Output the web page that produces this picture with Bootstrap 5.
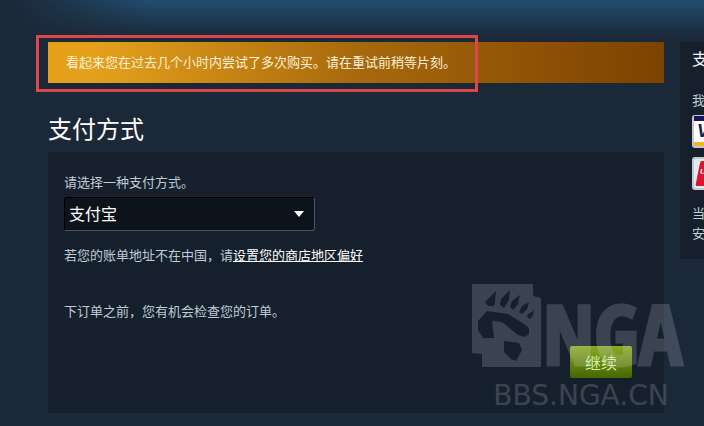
<!DOCTYPE html>
<html lang="zh-CN">
<head>
<meta charset="utf-8">
<meta name="viewport" content="width=device-width, initial-scale=1">
<title>支付方式</title>
<link href="https://cdn.jsdelivr.net/npm/bootstrap@5.3.0/dist/css/bootstrap.min.css" rel="stylesheet">
<style>
body{
  font:13px/20px "Noto Sans CJK SC",sans-serif;color:#bfcbd5;background-color:#1b2838;
  background-image:linear-gradient(90deg,#1b2838 10px,rgba(27,40,56,0) 150px),linear-gradient(180deg,#214d70 0,#1f3f5a 14px,#1b2838 38px);
  background-repeat:no-repeat;
}
.page-wrap{padding:42px 0 13px 48px;gap:16px}
.notice{padding:10px 18px 11px;color:#fbf0d8;background:linear-gradient(90deg,#e4a01b 0,#e4a01b 8%,#a8690d 50%,#7c4200 100%)}
.notice-frame{top:-7px;left:-12px;width:442px;height:57px;border:3px solid #dc474b}
.page-title{font-size:24px;line-height:36px;font-weight:400;color:#fff;margin:27px 0 6px}
.panel{background:#16202c}
.pay-panel{padding:20px 32px 35px 16px}
.pay-select{
  width:251px;height:34px;margin-top:5px;padding:0 32px 2px 4px;font-size:16px;line-height:24px;color:#fff;border-radius:3px;
  border:1px solid #000;border-right-color:#4b5663;border-bottom-color:#4b5663;
  background:#0d131a url("data:image/svg+xml,%3Csvg xmlns='http://www.w3.org/2000/svg' viewBox='0 0 10 6'%3E%3Cpath d='M0 0h10L5 6z' fill='%23fff'/%3E%3C/svg%3E") no-repeat right 10px center/10px 6px;
}
.region-note{margin:14px 0 36px}
.region-note a{color:#fff}
.review-note{margin:0 0 25px}
.go-btn{height:32px;padding:0 15px;font-size:16px;line-height:30px;color:#d2efa9;border:0;border-radius:2px;background:linear-gradient(180deg,#8aaa22,#466600)}
.go-btn:hover{color:#fff;background:#8aaa22}
.watermark{right:-20px;bottom:0;width:212px;height:132px;pointer-events:none}
.side{width:24px;padding:6px 0 16px 12px}
.side-title{font-size:16px;line-height:20px;font-weight:400;color:#fff;margin:0 0 22px}
.side svg{width:52px;height:33px;flex:none}
.side-cards{gap:9px;margin:5px 0 13px}
</style>
</head>
<body>
<div class="page-wrap d-flex align-items-start overflow-hidden">
  <main class="flex-grow-1">
    <div class="notice position-relative" role="alert">看起来您在过去几个小时内尝试了多次购买。请在重试前稍等片刻。
      <div class="notice-frame position-absolute"></div>
    </div>
    <h1 class="page-title">支付方式</h1>
    <form class="panel pay-panel position-relative">
      <label for="method" class="d-block">请选择一种支付方式。</label>
      <select id="method" class="form-select pay-select"><option>支付宝</option></select>
      <p class="region-note">若您的账单地址不在中国，请<a href="#">设置您的商店地区偏好</a></p>
      <p class="review-note">下订单之前，您有机会检查您的订单。</p>
      <div class="d-flex justify-content-end"><button type="button" class="btn go-btn">继续</button></div>
      <svg class="watermark position-absolute" viewBox="0 0 212 132" role="img" aria-label="NGA">
        <g fill="#e2e4f4" opacity=".18">
          <path fill-rule="evenodd" d="M0 3H61V15L69 17V86H10V73L0 72Z
            M24 10L23 21L22 25L16 25L13 21L17 17Z M38 9L37 19L32 27L28 24L29 18Z M48 14L46 23L41 29L38 26L40 20Z M57 21L55 28L50 33L47 31L50 25Z M62 27L61 35L58 38L55 36L56 33L60 31Z
            M15 30L36 33L52 43L57 47V53L53 56L46 54L30 41L20 40L22 57L11 57L6 49V40Z M32 60L47 62L50 69L44 80L39 78L32 71Z"/>
          <text x="71" y="84" font-family="'Open Sans Condensed','Roboto Condensed','Liberation Sans Narrow','Liberation Sans',sans-serif" font-size="82" font-weight="700" stroke="#e2e4f4" stroke-width="3">NGA</text>
          <text x="109" y="124" text-anchor="middle" font-family="'DejaVu Sans',sans-serif" font-size="28">BBS.NGA.CN</text>
        </g>
      </svg>
    </form>
  </main>
  <aside class="side panel flex-shrink-0 overflow-hidden text-nowrap">
    <h2 class="side-title">支</h2>
    <div>我</div>
    <div class="side-cards d-flex flex-column">
      <svg viewBox="0 0 52 33" aria-label="Visa"><rect width="52" height="33" rx="3" fill="#c5c8cf"/><path d="M2 1H50V6H2Z" fill="#16165e"/><path d="M2 6H50V27H2Z" fill="#fff"/><path d="M2 27H50V31H2Z" fill="#f0b321"/><text x="5" y="22" font-family="Liberation Sans" font-size="18" font-weight="700" font-style="italic" fill="#16165e">V</text></svg>
      <svg viewBox="0 0 52 33" aria-label="UnionPay"><rect width="52" height="33" rx="3" fill="#c5c8cf"/><rect x="2" y="2" width="48" height="29" rx="2" fill="#e8eaec"/><path d="M10 4H25L20 29H5Q3 29 4 26L8 6Q8 4 10 4Z" fill="#d9152f"/><text x="8" y="17" font-family="Liberation Sans" font-size="8" font-weight="700" font-style="italic" fill="#fff">U</text></svg>
    </div>
    <div>当<br>安</div>
  </aside>
</div>
<script src="https://cdn.jsdelivr.net/npm/bootstrap@5.3.0/dist/js/bootstrap.bundle.min.js"></script>
</body>
</html>
